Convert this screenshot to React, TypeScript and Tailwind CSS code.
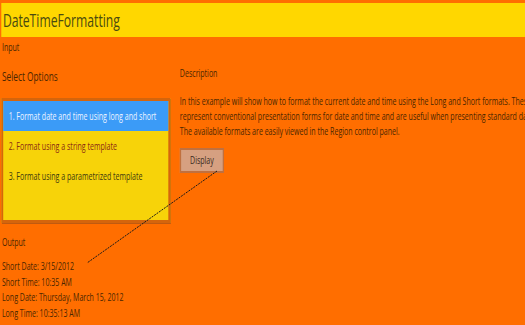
import React from "react";

const font = { fontFamily: '"Open Sans", "Noto Sans", sans-serif' };

export default function App() {
  return (
    <div
      className="relative w-[525px] h-[325px] overflow-hidden bg-[#FF6E00] text-[#4a2600]"
      style={font}
    >
      <div className="w-[821px] origin-top-left scale-x-[0.64] pt-[3px]">
        <div className="ml-[1.5px] h-[34px] bg-[#FFD700] pl-[3px] text-[19px] leading-[34px] text-[#4a4a10]">
          DateTimeFormatting
        </div>
        <div className="mt-[3px] pl-[3px] text-[11px] leading-[14px]">Input</div>
        <div className="mt-[11px] flex">
          <div className="w-[281px] shrink-0 pl-[1.5px] pt-[3px]">
            <div className="pl-[1.5px] text-[13px] leading-[16px]">Select Options</div>
            <div className="mt-[14px] h-[125px] w-[264px] border-[3px] border-[#D5650C] bg-[#F7D309] shadow-[1px_1px_0_#c05a10]">
              <div className="h-[30px] bg-[#3B9BF7] pl-[9px] text-[11px] leading-[30px] text-[#eef4ff]">
                1. Format date and time using long and short
              </div>
              <div className="h-[30px] pl-[9px] text-[11px] leading-[30px] text-[#8a2a14]">
                2. Format using a string template
              </div>
              <div className="h-[30px] pl-[9px] text-[11px] leading-[30px] text-[#3f3a10]">
                3. Format using a parametrized template
              </div>
            </div>
            <div className="mt-[12px] pl-[1.5px] text-[11px] leading-[14px]">Output</div>
            <div className="mt-[9px] pl-[1.5px] text-[11px] leading-[15.5px]">
              <div>Short Date: 3/15/2012</div>
              <div>Short Time: 10:35 AM</div>
              <div>Long Date: Thursday, March 15, 2012</div>
              <div>Long Time: 10:35:13 AM</div>
            </div>
          </div>
          <div className="flex-1">
            <div className="text-[11px] leading-[16px]">Description</div>
            <div className="mt-[11.5px] whitespace-nowrap text-[11px] leading-[15px]">
              <div>
                In this example will show how to format the current date and time using the Long and Short formats. These
              </div>
              <div>
                represent conventional presentation forms for date and time and are useful when presenting standard data
              </div>
              <div>The available formats are easily viewed in the Region control panel.</div>
            </div>
            <button className="mt-[10.5px] h-[25px] w-[69px] border-2 border-[#C0703F] bg-[#D6A081] text-[11px] text-[#3a2a20]">
              Display
            </button>
          </div>
        </div>
      </div>
      <svg className="pointer-events-none absolute left-0 top-0" width="525" height="325">
        <line x1="217" y1="171" x2="87" y2="263" stroke="#1a1a1a" strokeWidth="1" strokeDasharray="2 1" />
      </svg>
    </div>
  );
}
